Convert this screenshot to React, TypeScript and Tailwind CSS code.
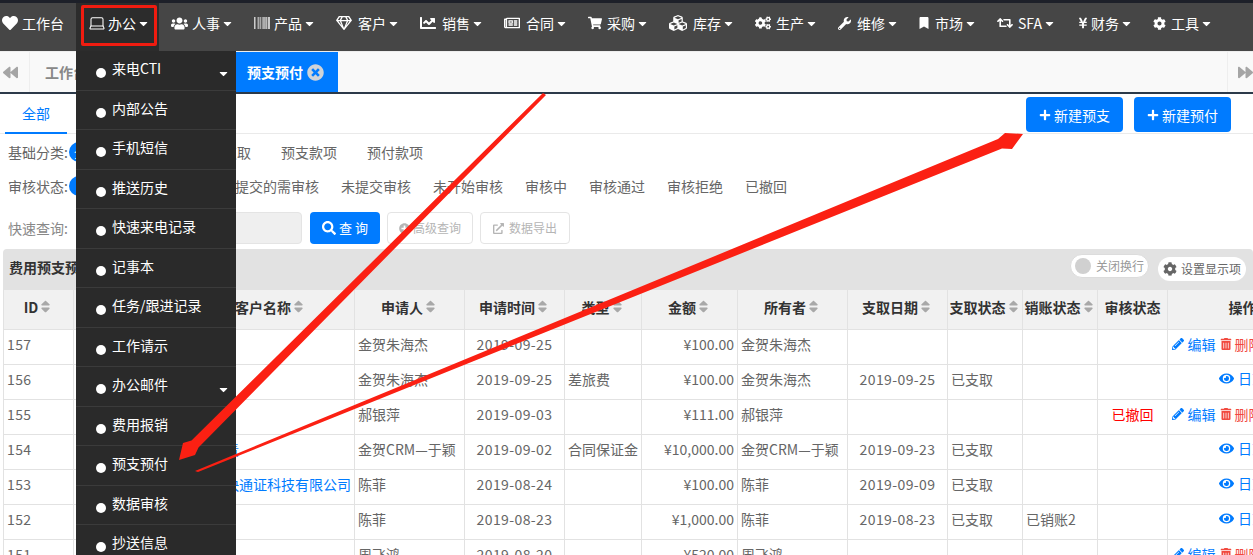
import React from "react";
import {
  FaHeart, FaUsers, FaBarcode, FaRegGem, FaChartLine, FaRegNewspaper, FaShoppingCart, FaCubes, FaCogs,
  FaWrench, FaBookmark, FaRetweet, FaYenSign, FaCog, FaCaretDown, FaBackward, FaForward, FaTimesCircle,
  FaPlus, FaSearch, FaPlusCircle, FaExternalLinkAlt, FaSort, FaPencilAlt, FaTrashAlt, FaEye,
} from "react-icons/fa";
import { Laptop } from "lucide-react";

const nav = [
  { t: "工作台", i: <FaHeart size={16} />, w: "w-[76px] pl-[2px]", b: "w-[20px]", c: false },
  { t: "办公", i: <Laptop size={18} strokeWidth={1.4} />, w: "w-[83px] pl-[12px] bg-[#2c2c2c]", b: "w-[20px]", c: true },
  { t: "人事", i: <FaUsers size={17} />, w: "w-[83px] pl-[12px]", b: "w-[21px]", c: true },
  { t: "产品", i: <FaBarcode size={16} />, w: "w-[82px] pl-[12px]", b: "w-[20px]", c: true },
  { t: "客户", i: <FaRegGem size={16} />, w: "w-[84px] pl-[12px]", b: "w-[22px]", c: true },
  { t: "销售", i: <FaChartLine size={16} />, w: "w-[84px] pl-[12px]", b: "w-[22px]", c: true },
  { t: "合同", i: <FaRegNewspaper size={16} />, w: "w-[84px] pl-[12px]", b: "w-[22px]", c: true },
  { t: "采购", i: <FaShoppingCart size={14} />, w: "w-[81px] pl-[12px]", b: "w-[19px]", c: true },
  { t: "库存", i: <FaCubes size={18} />, w: "w-[86px] pl-[12px]", b: "w-[24px]", c: true },
  { t: "生产", i: <FaCogs size={16} />, w: "w-[83px] pl-[12px]", b: "w-[21px]", c: true },
  { t: "维修", i: <FaWrench size={13} />, w: "w-[80px] pl-[12px]", b: "w-[19px]", c: true },
  { t: "市场", i: <FaBookmark size={12} />, w: "w-[79px] pl-[12px]", b: "w-[17px]", c: true },
  { t: "SFA", i: <FaRetweet size={16} />, w: "w-[80px] pl-[12px]", b: "w-[21px]", c: true },
  { t: "财务", i: <FaYenSign size={12} />, w: "w-[76px] pl-[12px]", b: "w-[14px]", c: true },
  { t: "工具", i: <FaCog size={13} />, w: "w-[100px] pl-[12px]", b: "w-[18px]", c: true },
];

const menu = ["来电CTI", "内部公告", "手机短信", "推送历史", "快速来电记录", "记事本", "任务/跟进记录", "工作请示", "办公邮件", "费用报销", "预支预付", "数据审核", "抄送信息"];

type Row = { id: string; cust?: string; p: string; d: string; k?: string; m: string; o: string; q?: string; s?: string; x?: string; a?: string; edit: boolean };
const rows: Row[] = [
  { id: "157", p: "金贺朱海杰", d: "2019-09-25", m: "¥100.00", o: "金贺朱海杰", edit: true },
  { id: "156", p: "金贺朱海杰", d: "2019-09-25", k: "差旅费", m: "¥100.00", o: "金贺朱海杰", q: "2019-09-25", s: "已支取", edit: false },
  { id: "155", p: "郝银萍", d: "2019-09-03", m: "¥111.00", o: "郝银萍", a: "已撤回", edit: true },
  { id: "154", cust: "金贺责", p: "金贺CRM—于颖", d: "2019-09-02", k: "合同保证金", m: "¥10,000.00", o: "金贺CRM—于颖", q: "2019-09-23", s: "已支取", edit: false },
  { id: "153", cust: "北京快通证科技有限公司", p: "陈菲", d: "2019-08-24", m: "¥100.00", o: "陈菲", q: "2019-09-09", s: "已支取", edit: false },
  { id: "152", p: "陈菲", d: "2019-08-23", m: "¥1,000.00", o: "陈菲", q: "2019-08-23", s: "已支取", x: "已销账2", edit: false },
  { id: "151", p: "周飞鸿", d: "2019-08-20", m: "¥520.00", o: "周飞鸿", edit: true },
];

const th = "border border-[#e2e2e2] text-center text-[14px] font-bold text-[#333] p-0 pb-[6px] whitespace-nowrap";
const td = "border border-[#e2e2e2] text-[14px] text-[#666] pl-[3px] pr-[3px] pt-0 pb-[6px] whitespace-nowrap overflow-hidden";

function H({ t, sort = true }: { t: string; sort?: boolean }) {
  return (
    <th className={th}>
      <span className="inline-flex items-center justify-center">
        {t}
        {sort && <FaSort size={15} className="text-[#a8a8a8]" />}
      </span>
    </th>
  );
}

function View() {
  return (
    <span className="inline-flex items-center text-[#007bff]">
      <FaEye size={15} className="mr-[4px]" />
      日志
    </span>
  );
}

export default function App() {
  return (
    <div className="relative w-[1253px] h-[555px] overflow-hidden bg-white font-['Noto_Sans_CJK_SC','Noto_Sans',sans-serif] text-[14px] leading-[20px]">
      <div className="h-[3px] bg-[#1d2029]" />
      <nav className="flex h-[48px] bg-[#464646] text-white">
        {nav.map((n) => (
          <div key={n.t} className={`flex shrink-0 items-center h-full pb-[8px] whitespace-nowrap ${n.w}`}>
            <span className={`flex shrink-0 items-center ${n.b}`}>{n.i}</span>
            <span>{n.t}</span>
            {n.c && <FaCaretDown size={13} className="ml-[1px]" />}
          </div>
        ))}
      </nav>

      <div className="flex h-[41px] bg-[#f9f9f9] border-t border-[#eeeeee]">
        <div className="flex w-[30px] items-center justify-start pl-[3px] border-r border-[#eeeeee] text-[#a5a5a5]">
          <FaBackward size={15} />
        </div>
        <div className="flex w-[206px] items-center pl-[15px] text-[#888] font-bold">工作台</div>
        <div className="flex w-[102px] items-center justify-end pr-[14px] bg-[#007bff] text-white font-bold">
          预支预付
          <FaTimesCircle size={17} className="ml-[4px] text-[#cfd3d8]" />
        </div>
        <div className="flex-1" />
        <div className="flex w-[26px] items-center justify-end border-l border-[#eeeeee] text-[#a5a5a5]">
          <FaForward size={15} />
        </div>
      </div>
      <div className="h-[2px] bg-[#2c3a4a]" />

      <div className="flex h-[40px] border-b border-[#eaeaea]">
        <div className="flex w-[62px] ml-[5px] items-center justify-center border-b-2 border-[#007bff] text-[#007bff] h-[40px]">全部</div>
        <div className="ml-auto flex gap-[11px] pt-[3px] pr-[22px]">
          {["新建预支", "新建预付"].map((t) => (
            <button key={t} className="flex h-[35px] w-[97px] items-center justify-center rounded-[4px] bg-[#007bff] text-white">
              <FaPlus size={12} className="mr-[3px]" />
              {t}
            </button>
          ))}
        </div>
      </div>

      <div className="flex h-[35px] items-center pl-[8px] text-[#666]">
        <span className="w-[61px]">基础分类:</span>
        <div className="flex items-center gap-[30px]">
          <span className="flex h-[20px] w-[38px] items-center justify-center rounded-full bg-[#007bff] text-white">全部</span>
          <span>未支取</span>
          <span>已支取</span>
          <span>预支款项</span>
          <span>预付款项</span>
        </div>
      </div>
      <div className="flex h-[34px] items-center pl-[8px] text-[#666]">
        <span className="w-[61px]">审核状态:</span>
        <div className="flex items-center gap-[22px]">
          <span className="flex h-[20px] w-[52px] items-center justify-center rounded-full bg-[#007bff] text-white">全部</span>
          <span>无需审核</span>
          <span>已提交的需审核</span>
          <span>未提交审核</span>
          <span>未开始审核</span>
          <span>审核中</span>
          <span>审核通过</span>
          <span>审核拒绝</span>
          <span>已撤回</span>
        </div>
      </div>
      <div className="flex h-[46px] items-start pt-[9px] pl-[8px] text-[#888]">
        <span className="w-[71px] leading-[32px]">快速查询:</span>
        <div className="h-[32px] w-[223px] rounded-[4px] border border-[#e4e4e4] bg-[#efefef]" />
        <button className="ml-[8px] flex h-[32px] w-[70px] items-center justify-center rounded-[4px] bg-[#007bff] text-[13px] text-white whitespace-pre">
          <FaSearch size={14} className="mr-[3px]" />查 询
        </button>
        <button className="ml-[7px] flex h-[32px] w-[86px] items-center justify-center rounded-[4px] border border-[#e4e4e4] text-[12px] text-[#b5b5b5]">
          <FaPlusCircle size={11} className="mr-[3px]" />高级查询
        </button>
        <button className="ml-[7px] flex h-[32px] w-[90px] items-center justify-center rounded-[4px] border border-[#e4e4e4] text-[12px] text-[#b5b5b5]">
          <FaExternalLinkAlt size={11} className="mr-[5px]" />数据导出
        </button>
      </div>

      <div className="ml-[3px] w-[1250px] h-[40px] flex rounded-t-[4px] bg-[#e2e2e2]">
        <div className="pl-[6px] pt-[8px] font-bold text-[14px] text-[#333]">费用预支预付列表</div>
        <div className="ml-auto flex items-start pr-[7px]">
          <div className="mt-[5px] flex h-[24px] w-[79px] items-center rounded-full border border-[#dcdcdc] bg-white pl-[4px] text-[12px] text-[#999]">
            <span className="mr-[5px] h-[16px] w-[16px] rounded-full bg-[#d0d0d0]" />
            关闭换行
          </div>
          <div className="ml-[9px] mt-[8px] flex h-[24px] w-[88px] items-center justify-center rounded-full bg-white text-[12px] text-[#666]">
            <FaCog size={14} className="mr-[4px]" />
            设置显示项
          </div>
        </div>
      </div>

      <table className="ml-[3px] w-[1314px] max-w-none table-fixed border-collapse">
        <colgroup>
          <col className="w-[70px]" /><col className="w-[113px]" /><col className="w-[168px]" /><col className="w-[110px]" />
          <col className="w-[100px]" /><col className="w-[77px]" /><col className="w-[96px]" /><col className="w-[110px]" />
          <col className="w-[100px]" /><col className="w-[75px]" /><col className="w-[75px]" /><col className="w-[70px]" /><col className="w-[150px]" />
        </colgroup>
        <thead>
          <tr className="h-[40px] bg-[#f1f1f1]">
            <H t="ID" /><H t="编号" /><H t="客户名称" /><H t="申请人" /><H t="申请时间" /><H t="类型" /><H t="金额" />
            <H t="所有者" /><H t="支取日期" /><H t="支取状态" /><H t="销账状态" /><H t="审核状态" sort={false} /><H t="操作" sort={false} />
          </tr>
        </thead>
        <tbody>
          {rows.map((r) => (
            <tr key={r.id} className="h-[35px]">
              <td className={td}><span className="tracking-[0.4px]">{r.id}</span></td>
              <td className={td} />
              <td className={td}><span className="ml-[7px] text-[#007bff]">{r.cust}</span></td>
              <td className={td}>{r.p}</td>
              <td className={`${td} text-center`}><span className="tracking-[0.4px]">{r.d}</span></td>
              <td className={td}>{r.k}</td>
              <td className={`${td} text-right`}>{r.m}</td>
              <td className={td}>{r.o}</td>
              <td className={`${td} text-center`}><span className="tracking-[0.4px]">{r.q}</span></td>
              <td className={td}>{r.s}</td>
              <td className={td}>{r.x}</td>
              <td className={`${td} text-center`}><span className="text-[#ff0000]">{r.a}</span></td>
              <td className={`${td} text-center`}>
                {r.edit ? (
                  <span className="inline-flex items-center">
                    <span className="inline-flex items-center text-[#007bff]"><FaPencilAlt size={12} className="mr-[4px]" />编辑</span>
                    <span className="mx-[4px] inline-flex items-center text-[#f1493f]"><FaTrashAlt size={12} className="mr-[3px]" />删除</span>
                    <View />
                  </span>
                ) : (
                  <View />
                )}
              </td>
            </tr>
          ))}
        </tbody>
      </table>

      {/* dropdown menu over the page */}
      <div className="absolute left-[76px] top-[51px] w-[160px] bg-[#2a2a2a] text-white">
        {menu.map((m) => (
          <div key={m} className="relative flex h-[39.5px] items-center border-b border-[#3b3b3b] pl-[20px]">
            <span className="mt-[6px] mr-[6px] h-[10px] w-[10px] rounded-full bg-white" />
            <span className="mb-[4px]">{m}</span>
            {(m === "来电CTI" || m === "办公邮件") && <FaCaretDown size={13} className="absolute right-[6px] top-[16px]" />}
          </div>
        ))}
      </div>

      {/* red annotation drawn over the screenshot */}
      <div className="absolute left-[81px] top-[5px] h-[41px] w-[76px] rounded-[2px] border-[3px] border-[#f01c10]" />
      <svg className="absolute left-0 top-0 pointer-events-none" width="1253" height="555" viewBox="0 0 1253 555">
        <polygon fill="#fb2013" points="195,471 198,472 1002,148.5 1012,149 1023,134 1005,133 998,139" />
        <polygon fill="#fb2013" points="543,93 546,95 198.5,447.5 195,455 179,460 183,443 191.5,440.5" />
      </svg>
    </div>
  );
}
